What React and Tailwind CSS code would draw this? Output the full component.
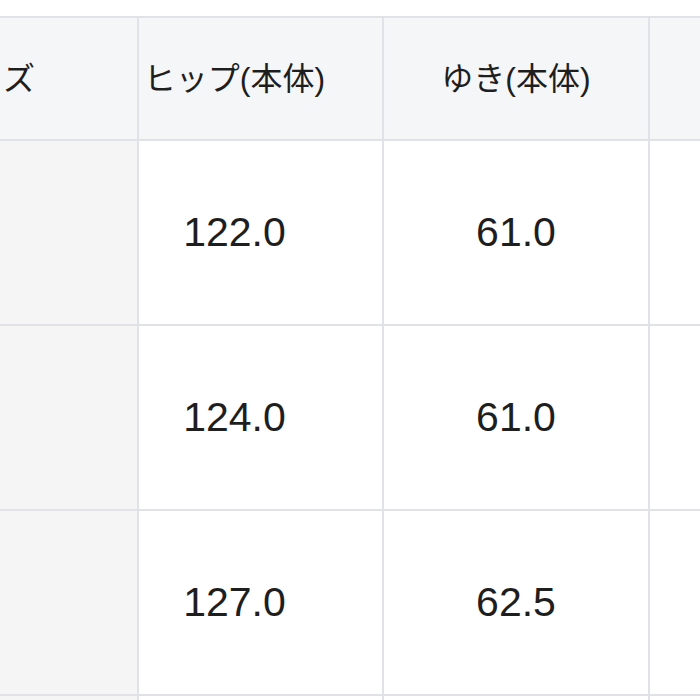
import React from 'react'

const rows = [
  { hip: '122.0', yuki: '61.0' },
  { hip: '124.0', yuki: '61.0' },
  { hip: '127.0', yuki: '62.5' },
  { hip: '', yuki: '' },
]

const font = { fontFamily: '"Liberation Sans", "Noto Sans CJK JP", sans-serif' }

function App() {
  return (
    <div className="w-[700px] h-[700px] overflow-hidden bg-white pt-4" style={font}>
      <table className="-ml-[100px] w-[950px] table-fixed border-separate border-spacing-0 text-[#1e1e1e]">
        <thead>
          <tr className="h-[125px]">
            <th className="w-[239px] bg-[#f5f6f7] border-t-2 border-b-2 border-r-2 border-[#dfe2e7] text-right pr-[102px] font-normal text-[32px] whitespace-nowrap">
              サイズ
            </th>
            <th className="w-[245px] bg-[#f5f6f7] border-t-2 border-b-2 border-r-2 border-[#dfe2e7] text-center pr-[52px] font-normal text-[32px] whitespace-nowrap">
              ヒップ(本体)
            </th>
            <th className="w-[266px] bg-[#f5f6f7] border-t-2 border-b-2 border-r-2 border-[#dfe2e7] text-center font-normal text-[32px] whitespace-nowrap">
              ゆき(本体)
            </th>
            <th className="w-[200px] bg-[#f5f6f7] border-t-2 border-b-2 border-[#dfe2e7]"></th>
          </tr>
        </thead>
        <tbody>
          {rows.map((r, i) => (
            <tr key={i} className="h-[185px]">
              <td className="bg-[#f5f5f6] border-b-2 border-r-2 border-[#dfe2e7]"></td>
              <td className="bg-white border-b-2 border-r-2 border-[#dfe2e7] text-center pr-[52px] text-[41px]">
                {r.hip}
              </td>
              <td className="bg-white border-b-2 border-r-2 border-[#dfe2e7] text-center text-[41px]">
                {r.yuki}
              </td>
              <td className="bg-white border-b-2 border-[#dfe2e7]"></td>
            </tr>
          ))}
        </tbody>
      </table>
    </div>
  )
}

export default App
